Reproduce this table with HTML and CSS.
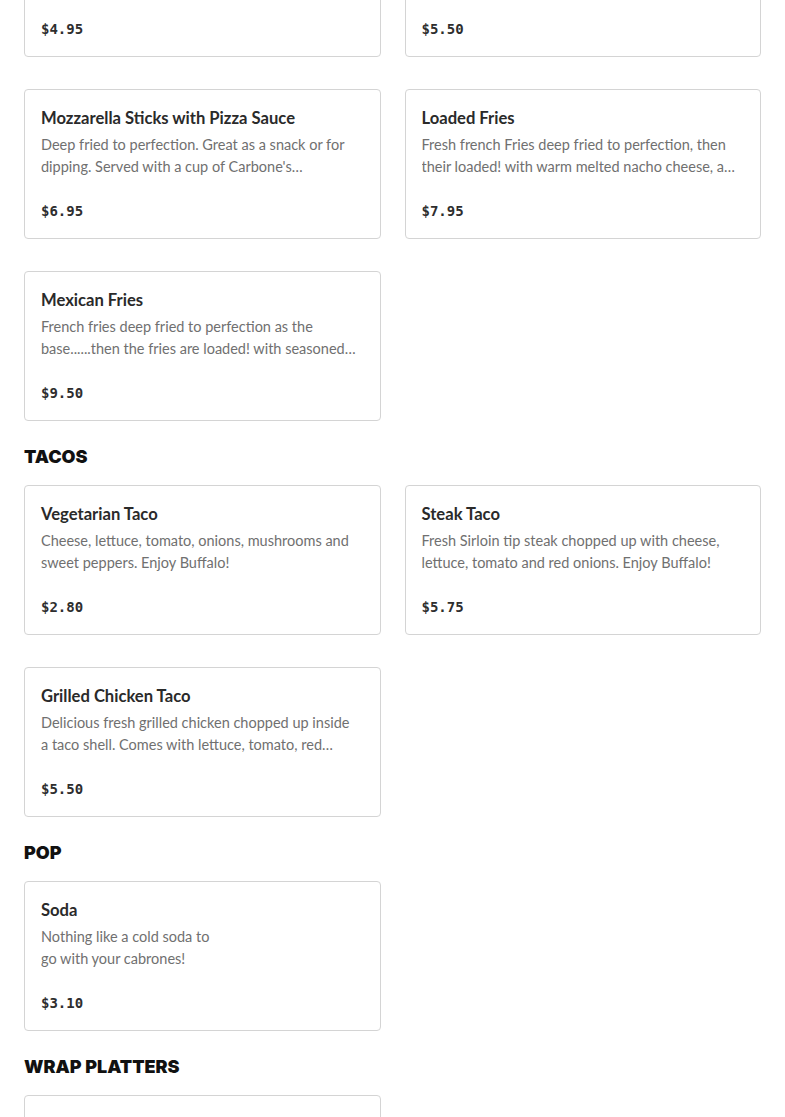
FILE: index.html
```html
<!DOCTYPE html>
<html lang="en">
<head>
<meta charset="utf-8">
<title>Menu</title>
<link rel="stylesheet" href="styles.css">
</head>
<body>
<main class="menu">
  <section class="section section-first">
    <div class="grid">
      <article class="card">
        <h3 class="item-name">French Fries</h3>
        <p class="item-desc">Fresh cut french fries deep fried to perfection and lightly salted. Enjoy Buffalo!</p>
        <div class="item-price">$4.95</div>
      </article>
      <article class="card">
        <h3 class="item-name">Cheese Fries</h3>
        <p class="item-desc">Fresh french fries deep fried to perfection and topped with warm melted cheese.</p>
        <div class="item-price">$5.50</div>
      </article>
      <article class="card">
        <h3 class="item-name">Mozzarella Sticks with Pizza Sauce</h3>
        <p class="item-desc">Deep fried to perfection. Great as a snack or for dipping. Served with a cup of Carbone's homemade pizza sauce.</p>
        <div class="item-price">$6.95</div>
      </article>
      <article class="card">
        <h3 class="item-name">Loaded Fries</h3>
        <p class="item-desc">Fresh french Fries deep fried to perfection, then their loaded! with warm melted nacho cheese, a dollop of sour cream and jalapenos.</p>
        <div class="item-price">$7.95</div>
      </article>
      <article class="card">
        <h3 class="item-name">Mexican Fries</h3>
        <p class="item-desc">French fries deep fried to perfection as the base......then the fries are loaded! with seasoned ground beef, nacho cheese and sour cream.</p>
        <div class="item-price">$9.50</div>
      </article>
    </div>
  </section>

  <section class="section">
    <h2 class="section-title">TACOS</h2>
    <div class="grid">
      <article class="card">
        <h3 class="item-name">Vegetarian Taco</h3>
        <p class="item-desc">Cheese, lettuce, tomato, onions, mushrooms and sweet peppers. Enjoy Buffalo!</p>
        <div class="item-price">$2.80</div>
      </article>
      <article class="card">
        <h3 class="item-name">Steak Taco</h3>
        <p class="item-desc">Fresh Sirloin tip steak chopped up with cheese, lettuce, tomato and red onions. Enjoy Buffalo!</p>
        <div class="item-price">$5.75</div>
      </article>
      <article class="card">
        <h3 class="item-name">Grilled Chicken Taco</h3>
        <p class="item-desc">Delicious fresh grilled chicken chopped up inside a taco shell. Comes with lettuce, tomato, red onions and cheese. Enjoy Buffalo!</p>
        <div class="item-price">$5.50</div>
      </article>
    </div>
  </section>

  <section class="section">
    <h2 class="section-title">POP</h2>
    <div class="grid">
      <article class="card">
        <h3 class="item-name">Soda</h3>
        <p class="item-desc item-desc-narrow">Nothing like a cold soda to go with your cabrones!</p>
        <div class="item-price">$3.10</div>
      </article>
    </div>
  </section>

  <section class="section">
    <h2 class="section-title">WRAP PLATTERS</h2>
    <div class="grid">
      <article class="card card-loading">
        <h3 class="item-name">Buffalo Chicken Wrap</h3>
        <p class="item-desc">Grilled chicken tossed in buffalo sauce with lettuce and tomato.</p>
        <div class="item-price">$8.95</div>
      </article>
    </div>
  </section>
</main>
</body>
</html>
```

FILE: styles.css
```css
* {
  box-sizing: border-box;
}

html, body {
  margin: 0;
  padding: 0;
  background: #ffffff;
}

body {
  font-family: Lato, "Liberation Sans", sans-serif;
  color: #222222;
}

.menu {
  padding: 0 24px;
}

.section-first {
  margin-top: -93px;
}

.section {
  margin-bottom: 24px;
}

.section-title {
  margin: 0 0 16px;
  font-family: Inter, "Liberation Sans", sans-serif;
  font-weight: 900;
  font-size: 18px;
  line-height: 24px;
  letter-spacing: 0;
  color: #111111;
}

.grid {
  display: grid;
  grid-template-columns: 1fr 1fr;
  column-gap: 24px;
  row-gap: 32px;
}

.card {
  border: 1px solid #d4d4d4;
  border-radius: 4px;
  padding: 16px;
  height: 150px;
  display: flex;
  flex-direction: column;
  background: #fff;
}

.item-name {
  margin: 0;
  font-size: 16.6px;
  line-height: 24px;
  font-weight: 700;
  color: #2a2a2a;
}

.item-desc {
  margin: 4px 4px 0 0;
  font-size: 14.5px;
  line-height: 22px;
  color: #707070;
  display: -webkit-box;
  -webkit-line-clamp: 2;
  -webkit-box-orient: vertical;
  overflow: hidden;
  height: 44px;
}

.item-desc-narrow {
  max-width: 180px;
}

.item-price {
  margin-top: auto;
  font-family: "DejaVu Sans Mono", "Liberation Mono", monospace;
  font-weight: 700;
  font-size: 14px;
  line-height: 22px;
  color: #2e2e2e;
}

.card-loading .item-name,
.card-loading .item-desc,
.card-loading .item-price {
  opacity: 0.12;
}
```
